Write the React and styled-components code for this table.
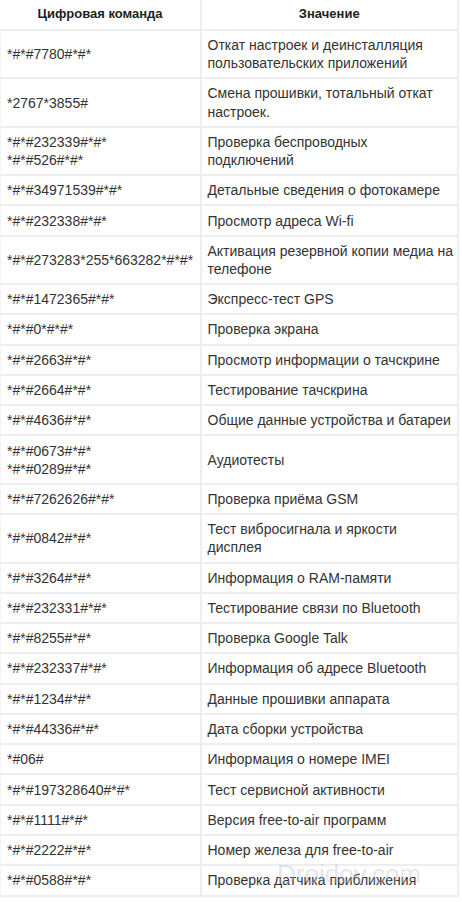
import styled, { createGlobalStyle } from "styled-components";

const GlobalStyle = createGlobalStyle`
  html, body {
    margin: 0;
    padding: 0;
    background: #fff;
  }
  body {
    font-family: "Liberation Sans", Arial, sans-serif;
  }
  *, *::before, *::after {
    box-sizing: border-box;
  }
`;

const Wrapper = styled.div`
  position: relative;
  width: 462px;
  padding-bottom: 6px;
`;

const Table = styled.table`
  width: 459px;
  border-collapse: collapse;
  table-layout: fixed;
  font-size: 14px;
  line-height: 18.1px;
  color: #333;
`;

const HeadCell = styled.th`
  width: ${(p) => p.width || "auto"};
  height: 30px;
  padding: 0 6px;
  font-size: 13px;
  font-weight: bold;
  color: #1e1e1e;
  text-align: center;
  border: 2px solid #eeeeee;
  border-top: none;
  border-left: none;
`;

const Cell = styled.td`
  padding: 5.1px 3px 5.1px 6px;
  vertical-align: middle;
  border: 2px solid #eeeeee;
  border-left: ${(p) => (p.first ? "1px solid #f4f4f4" : "2px solid #eeeeee")};
  word-wrap: break-word;
`;

const Watermark = styled.div`
  position: absolute;
  left: 277px;
  top: 859px;
  font-family: "Liberation Sans", Arial, sans-serif;
  font-size: 26px;
  color: rgba(180, 192, 215, 0.4);
  pointer-events: none;
`;

const rows = [
  [["*#*#7780#*#*"], "Откат настроек и деинсталляция пользовательских приложений"],
  [["*2767*3855#"], "Смена прошивки, тотальный откат настроек."],
  [["*#*#232339#*#*", "*#*#526#*#*"], "Проверка беспроводных подключений"],
  [["*#*#34971539#*#*"], "Детальные сведения о фотокамере"],
  [["*#*#232338#*#*"], "Просмотр адреса Wi-fi"],
  [["*#*#273283*255*663282*#*#*"], "Активация резервной копии медиа на телефоне"],
  [["*#*#1472365#*#*"], "Экспресс-тест GPS"],
  [["*#*#0*#*#*"], "Проверка экрана"],
  [["*#*#2663#*#*"], "Просмотр информации о тачскрине"],
  [["*#*#2664#*#*"], "Тестирование тачскрина"],
  [["*#*#4636#*#*"], "Общие данные устройства и батареи"],
  [["*#*#0673#*#*", "*#*#0289#*#*"], "Аудиотесты"],
  [["*#*#7262626#*#*"], "Проверка приёма GSM"],
  [["*#*#0842#*#*"], "Тест вибросигнала и яркости дисплея"],
  [["*#*#3264#*#*"], "Информация о RAM-памяти"],
  [["*#*#232331#*#*"], "Тестирование связи по Bluetooth"],
  [["*#*#8255#*#*"], "Проверка Google Talk"],
  [["*#*#232337#*#*"], "Информация об адресе Bluetooth"],
  [["*#*#1234#*#*"], "Данные прошивки аппарата"],
  [["*#*#44336#*#*"], "Дата сборки устройства"],
  [["*#06#"], "Информация о номере IMEI"],
  [["*#*#197328640#*#*"], "Тест сервисной активности"],
  [["*#*#1111#*#*"], "Версия free-to-air программ"],
  [["*#*#2222#*#*"], "Номер железа для free-to-air"],
  [["*#*#0588#*#*"], "Проверка датчика приближения"],
];

export default function App() {
  return (
    <>
      <GlobalStyle />
      <Wrapper>
        <Table>
          <thead>
            <tr>
              <HeadCell width="200px">Цифровая команда</HeadCell>
              <HeadCell>Значение</HeadCell>
            </tr>
          </thead>
          <tbody>
            {rows.map(([codes, text], i) => (
              <tr key={i}>
                <Cell first>
                  {codes.map((c, j) => (
                    <div key={j}>{c}</div>
                  ))}
                </Cell>
                <Cell>{text}</Cell>
              </tr>
            ))}
          </tbody>
        </Table>
        <Watermark>Droidov.com</Watermark>
      </Wrapper>
    </>
  );
}
